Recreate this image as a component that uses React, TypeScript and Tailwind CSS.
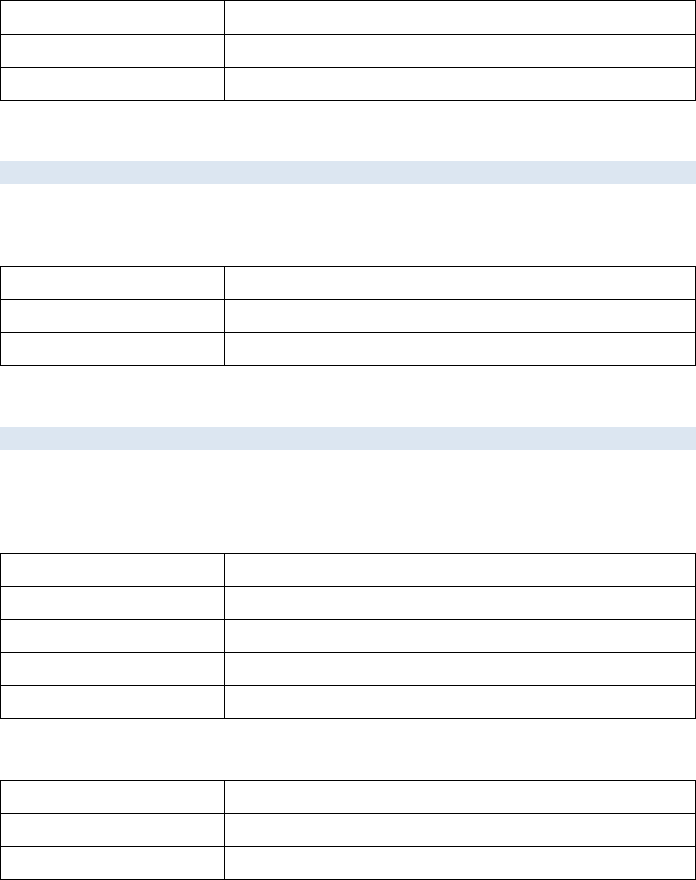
import React from 'react';

type TableProps = { rows: number; firstRowTall?: boolean };

const EmptyTable = ({ rows, firstRowTall = false }: TableProps) => {
  return (
    <div className="border-t border-l border-r border-black">
      {Array.from({ length: rows }).map((_, i) => (
        <div
          key={i}
          className={`flex border-b border-black ${i === 0 && firstRowTall ? 'h-[34px]' : 'h-[33px]'}`}
        >
          <div className="w-[224px] border-r border-black"></div>
          <div className="flex-1"></div>
        </div>
      ))}
    </div>
  );
};

const SectionBar = () => <div className="h-[23px] bg-[#dce6f1]"></div>;

const App = () => {
  return (
    <div className="w-[696px] bg-white font-['Liberation_Sans',Arial,sans-serif]">
      <EmptyTable rows={3} firstRowTall />
      <div className="mt-[60px]">
        <SectionBar />
      </div>
      <div className="mt-[82px]">
        <EmptyTable rows={3} />
      </div>
      <div className="mt-[61px]">
        <SectionBar />
      </div>
      <div className="mt-[103px]">
        <EmptyTable rows={5} />
      </div>
      <div className="mt-[61px]">
        <EmptyTable rows={3} />
      </div>
    </div>
  );
};

export default App;
